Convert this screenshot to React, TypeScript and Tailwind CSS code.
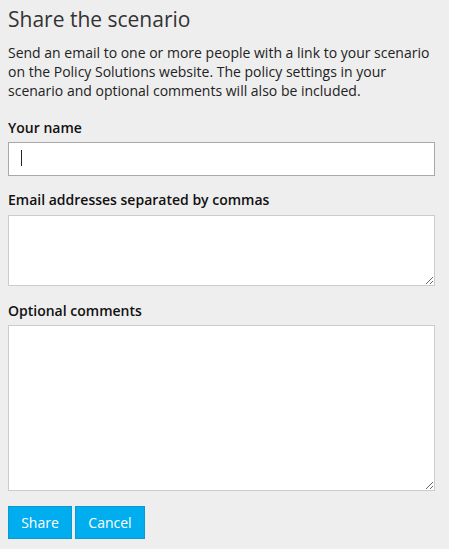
import React from "react";

const App: React.FC = () => {
  return (
    <div className="bg-[#eeeeee] w-[449px] h-[549px] px-2 pt-[5px] text-[#333333]" style={{ fontFamily: '"Open Sans", sans-serif' }}>
      <h2 className="text-[21px] leading-[29px] font-normal text-[#333333]">Share the scenario</h2>
      <p className="mt-[9px] text-[14px] leading-[19px] text-[#222222]">
        Send an email to one or more people with a link to your scenario on the Policy Solutions website. The policy settings in your scenario and optional comments will also be included.
      </p>

      <form className="mt-[18px]" onSubmit={(e) => e.preventDefault()}>
        <label className="block text-[14px] leading-[20px] font-semibold text-[#111111]">Your name</label>
        <div className="relative mt-[4px]">
          <input
            type="text"
            className="block w-[427px] h-[34px] bg-white border border-[#a9a9a9] px-3 text-[14px] outline-none"
          />
          {/* caret */}
          <span className="absolute left-[13px] top-[8px] w-px h-[16px] bg-[#222222]"></span>
        </div>

        <label className="block mt-[14px] text-[14px] leading-[20px] font-semibold text-[#111111]">Email addresses separated by commas</label>
        <textarea className="block mt-[5px] w-[427px] h-[71px] bg-white border border-[#cccccc] px-3 py-2 text-[14px] outline-none resize-y"></textarea>

        <label className="block mt-[15px] text-[14px] leading-[20px] font-semibold text-[#111111]">Optional comments</label>
        <textarea className="block mt-[4px] w-[427px] h-[166px] bg-white border border-[#cccccc] px-3 py-2 text-[14px] outline-none resize-y"></textarea>

        <div className="flex gap-[3px] mt-[15px]">
          <button type="submit" className="w-[64px] h-[33px] bg-[#00aeef] border border-[#0a9ad2] text-white text-[14px]">Share</button>
          <button type="button" className="w-[70px] h-[33px] bg-[#00aeef] border border-[#0a9ad2] text-white text-[14px]">Cancel</button>
        </div>
      </form>
    </div>
  );
};

export default App;
